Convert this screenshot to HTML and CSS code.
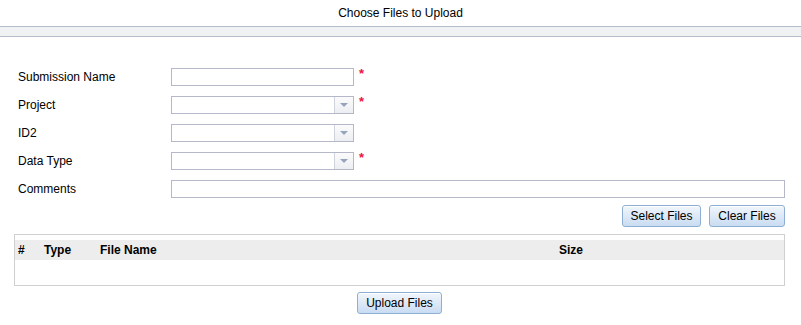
FILE: index.html
```html
<!DOCTYPE html>
<html lang="en">
<head>
    <meta charset="UTF-8">
    <title>Choose Files to Upload</title>
    <link rel="stylesheet" href="styles.css">
</head>
<body>
    <div class="title">Choose Files to Upload</div>
    <div class="band"></div>

    <div class="form">
        <div class="row">
            <label class="label">Submission Name</label>
            <input class="field" type="text">
            <span class="req">*</span>
        </div>
        <div class="row">
            <label class="label">Project</label>
            <div class="combo"><span class="combo-text"></span><span class="trigger"></span></div>
            <span class="req">*</span>
        </div>
        <div class="row">
            <label class="label">ID2</label>
            <div class="combo"><span class="combo-text"></span><span class="trigger"></span></div>
        </div>
        <div class="row">
            <label class="label">Data Type</label>
            <div class="combo"><span class="combo-text"></span><span class="trigger"></span></div>
            <span class="req">*</span>
        </div>
        <div class="row">
            <label class="label">Comments</label>
            <input class="field wide" type="text">
        </div>

        <div class="actions">
            <button class="btn btn-select">Select Files</button>
            <button class="btn btn-clear">Clear Files</button>
        </div>
    </div>

    <div class="files">
        <div class="files-head">
            <span class="col-num">#</span>
            <span class="col-type">Type</span>
            <span class="col-name">File Name</span>
            <span class="col-size">Size</span>
        </div>
    </div>

    <div class="upload">
        <button class="btn btn-upload">Upload Files</button>
    </div>
</body>
</html>
```

FILE: styles.css
```css
* {
    margin: 0;
    padding: 0;
    box-sizing: border-box;
}

body {
    font-family: 'Liberation Sans', Arial, sans-serif;
    font-size: 12px;
    color: #000;
    background: #fff;
}

.title {
    height: 26px;
    line-height: 26px;
    text-align: center;
}

.band {
    height: 11px;
    background: #f0f1f3;
    border-top: 1px solid #b4bccb;
    border-bottom: 1px solid #b4bccb;
}

.form {
    padding: 31px 16px 0 18px;
}

.row {
    display: flex;
    align-items: center;
    height: 18px;
    margin-bottom: 10px;
}

.label {
    width: 153px;
    flex-shrink: 0;
}

.field {
    width: 183px;
    height: 18px;
    border: 1px solid #b5b8c8;
    background: #fff;
    font: inherit;
    padding: 0 3px;
    outline: none;
}

.field.wide {
    flex: 1;
}

.combo {
    width: 183px;
    height: 18px;
    border: 1px solid #b5b8c8;
    display: flex;
    background: #fff;
}

.combo-text {
    flex: 1;
}

.trigger {
    width: 19px;
    border-left: 1px solid #cfd3dc;
    background: linear-gradient(#fbfbfc, #eceef2);
    position: relative;
}

.trigger::after {
    content: "";
    position: absolute;
    left: 5px;
    top: 6px;
    border-left: 4px solid transparent;
    border-right: 4px solid transparent;
    border-top: 4px solid #97a4bb;
}

.req {
    color: #f0103c;
    font-weight: bold;
    font-size: 13px;
    margin-left: 5px;
    align-self: flex-start;
    line-height: 10px;
    margin-top: 1px;
}

.actions {
    display: flex;
    justify-content: flex-end;
    gap: 8px;
    margin-top: -3px;
}

.btn {
    height: 22px;
    padding: 0;
    font: inherit;
    color: #000;
    border: 1px solid #8eafd4;
    border-radius: 3px;
    background: linear-gradient(#f1f6fc, #c9dcf2);
    box-shadow: inset 0 1px 0 #fff;
}

.btn-select { width: 79px; }
.btn-clear { width: 76px; }

.files {
    margin: 7px 16px 0 14px;
    height: 52px;
    border: 1px solid #d0d0d0;
    padding-top: 5px;
}

.files-head {
    display: flex;
    height: 20px;
    align-items: center;
    background: #ededed;
    font-weight: bold;
    padding-left: 3px;
}

.col-num { width: 26px; }
.col-type { width: 56px; }
.col-name { width: 402px; }
.col-size { width: 138px; text-align: center; }

.upload {
    display: flex;
    justify-content: center;
    padding-top: 6px;
    padding-right: 2px;
}

.btn-upload {
    width: 85px;
}
```
